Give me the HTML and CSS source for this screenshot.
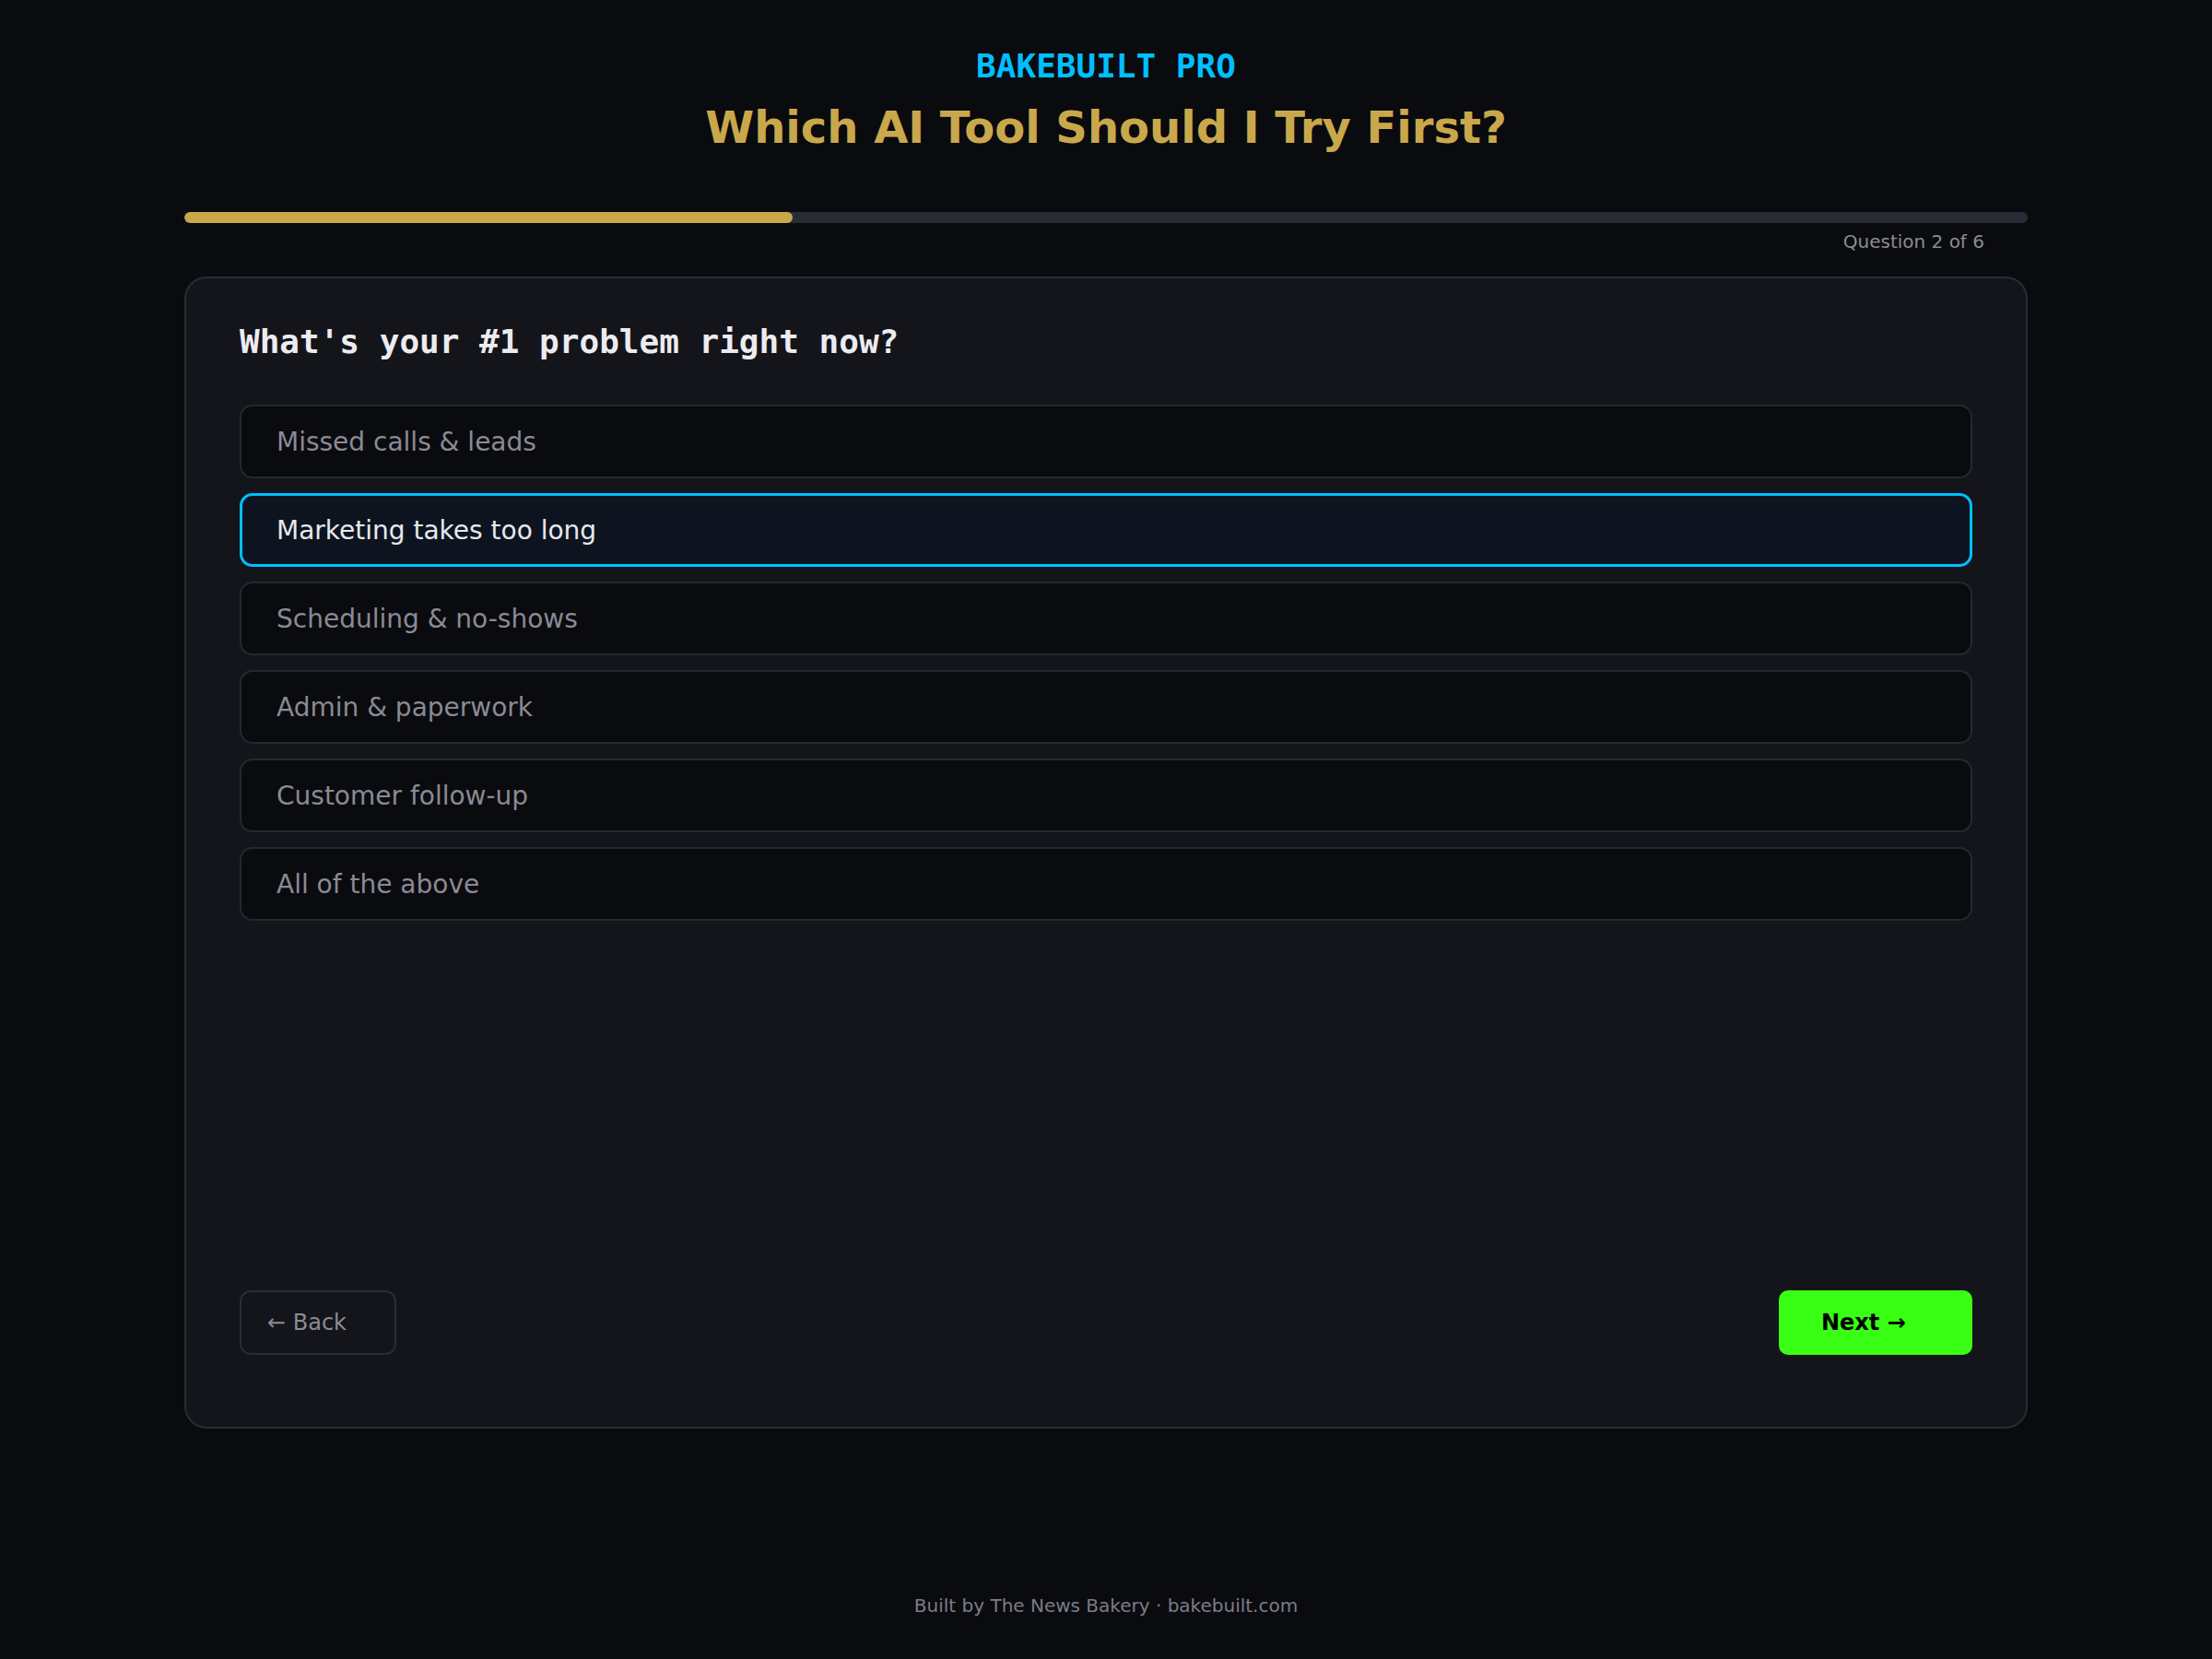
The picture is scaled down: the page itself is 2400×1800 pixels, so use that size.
FILE: index.html
```html
<!DOCTYPE html>
<html lang="en">
<head>
<meta charset="utf-8">
<title>BakeBuilt Pro Quiz</title>
<link rel="stylesheet" href="styles.css">
</head>
<body>
<div class="page">
  <header class="header">
    <div class="brand">BAKEBUILT PRO</div>
    <h1 class="title">Which AI Tool Should I Try First?</h1>
  </header>
  <div class="progress"><div class="progress-fill" style="width: 33%"></div></div>
  <div class="counter">Question 2 of 6</div>
  <main class="card">
    <h2 class="question">What's your #1 problem right now?</h2>
    <div class="options">
      <div class="option">Missed calls &amp; leads</div>
      <div class="option selected">Marketing takes too long</div>
      <div class="option">Scheduling &amp; no-shows</div>
      <div class="option">Admin &amp; paperwork</div>
      <div class="option">Customer follow-up</div>
      <div class="option">All of the above</div>
    </div>
    <div class="nav">
      <button class="btn-back">← Back</button>
      <button class="btn-next">Next →</button>
    </div>
  </main>
  <footer class="footer">Built by The News Bakery · bakebuilt.com</footer>
</div>
</body>
</html>
```
FILE: styles.css
```css
* { box-sizing: border-box; }
html, body {
  margin: 0;
  padding: 0;
  background: #0a0b0f;
}
body {
  font-family: "DejaVu Sans", "Liberation Sans", sans-serif;
}
.page {
  width: 2000px;
  margin: 0 auto;
  padding-top: 51px;
}
.header { text-align: center; }
.brand {
  font-family: "DejaVu Sans Mono", "Liberation Mono", monospace;
  font-weight: bold;
  font-size: 36px;
  color: #00bfff;
  line-height: normal;
}
.title {
  margin: 18px 0 0;
  font-family: "DejaVu Sans", sans-serif;
  font-weight: bold;
  font-size: 48px;
  line-height: normal;
  color: #c9a84c;
}
.progress {
  margin-top: 64px;
  height: 12px;
  border-radius: 6px;
  background: #2a2b36;
  overflow: hidden;
}
.progress-fill {
  height: 100%;
  border-radius: 6px;
  background: #c9a84c;
}
.counter {
  margin-top: 8px;
  padding-right: 47px;
  text-align: right;
  font-size: 20px;
  color: #8b8b96;
  line-height: normal;
}
.card {
  margin-top: 26px;
  height: 1250px;
  border: 2px solid #2a2b36;
  border-radius: 24px;
  background: #14151b;
  padding: 48px 58px 78px;
  display: flex;
  flex-direction: column;
}
.question {
  margin: 0 0 48px;
  font-family: "DejaVu Sans Mono", "Liberation Mono", monospace;
  font-weight: bold;
  font-size: 36px;
  line-height: normal;
  color: #ececf0;
}
.options {
  display: flex;
  flex-direction: column;
  gap: 16px;
}
.option {
  height: 80px;
  display: flex;
  align-items: center;
  padding: 0 38px;
  border: 2px solid #262731;
  border-radius: 14px;
  background: #0a0b0f;
  font-size: 28px;
  color: #8a8a95;
}
.option.selected {
  border: 3px solid #00bfff;
  padding: 0 37px;
  background: #0d1420;
  color: #e8e8ec;
}
.nav {
  margin-top: auto;
  display: flex;
  justify-content: space-between;
  align-items: center;
}
.btn-back {
  width: 170px;
  height: 70px;
  padding: 0 0 0 28px;
  text-align: left;
  border: 2px solid #2a2b36;
  border-radius: 12px;
  background: transparent;
  font-family: "DejaVu Sans", sans-serif;
  font-size: 24px;
  color: #8a8a95;
}
.btn-next {
  width: 210px;
  height: 70px;
  padding: 0 0 0 46px;
  text-align: left;
  border: none;
  border-radius: 10px;
  background: #39ff14;
  font-family: "DejaVu Sans", sans-serif;
  font-weight: bold;
  font-size: 24px;
  color: #000;
}
.footer {
  margin-top: 180px;
  text-align: center;
  font-size: 20px;
  line-height: normal;
  color: #7c7c87;
}
```
